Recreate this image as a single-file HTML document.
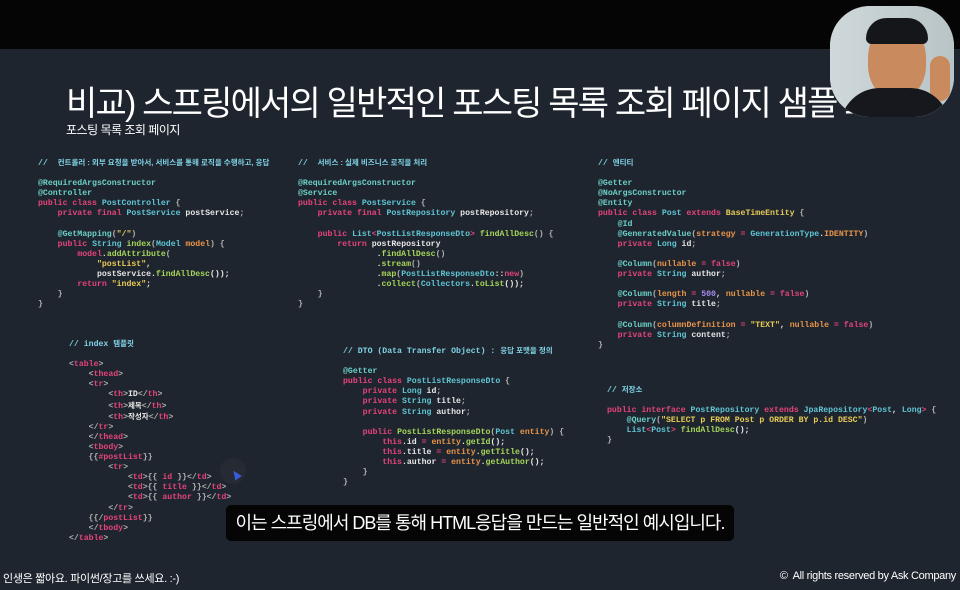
<!DOCTYPE html>
<html><head><meta charset="utf-8"><style>
body{margin:0;width:960px;height:590px;background:#1f252e;position:relative;overflow:hidden;font-family:"Liberation Sans","Noto Sans CJK KR",sans-serif;}
.top{position:absolute;left:0;top:0;width:960px;height:49px;background:#050505}
pre{position:absolute;margin:0;font-family:"Liberation Mono","Noto Sans CJK KR",monospace;font-size:8.2px;line-height:10.1px;color:#e6e6e6;white-space:pre;font-weight:bold}
.k{color:#e5437b}.t{color:#5fc6d6}.a{color:#6cd0c8}.f{color:#a6d65a}.o{color:#e8954a}.s{color:#e8cc55}.c{color:#7fd3e6}.n{color:#a98cf0}.p{color:#b0b0b0}
.h{font-family:"Liberation Sans","Noto Sans CJK KR",sans-serif;font-size:7.5px}
.title{position:absolute;left:66px;top:76px;color:#fff;font-size:34px;white-space:nowrap;letter-spacing:-1.8px}
.sub{position:absolute;left:66px;top:121px;color:#fff;font-size:12px;letter-spacing:-0.5px}
.cap{position:absolute;left:226px;top:505px;width:508px;height:36px;background:#050505;border-radius:5px;color:#fff;font-size:18px;line-height:36px;text-align:center;letter-spacing:-1px;white-space:nowrap}
.foot{position:absolute;top:570px;color:#fff;font-size:11px;letter-spacing:-0.3px}
.cam{position:absolute;left:830px;top:6px;width:124px;height:111px;border-radius:40px;overflow:hidden;background:#c9d3d6}
</style></head><body>
<div class="top"></div>
<div class="title">비교) 스프링에서의 일반적인 포스팅 목록 조회 페이지 샘플 코드</div>
<div class="sub">포스팅 목록 조회 페이지</div>
<div class="cam">
<div style="position:absolute;left:0;top:0;width:124px;height:111px;background:linear-gradient(90deg,#cfd8da,#b8c4c6)"></div>
<div style="position:absolute;left:38px;top:18px;width:58px;height:75px;border-radius:45%;background:#c98a5e"></div>
<div style="position:absolute;left:36px;top:12px;width:62px;height:26px;border-radius:30px 30px 8px 8px;background:#15161a"></div>
<div style="position:absolute;left:100px;top:50px;width:20px;height:45px;border-radius:10px;background:#c98a5e"></div>
<div style="position:absolute;left:10px;top:82px;width:110px;height:40px;border-radius:40px 40px 0 0;background:#16181d"></div>
</div>

<pre style="left:38px;top:158px"><span class="c">//  <span class="h">컨트롤러 : 외부 요청을 받아서, 서비스를 통해 로직을 수행하고, 응답</span></span>

<span class="a">@RequiredArgsConstructor</span>
<span class="a">@Controller</span>
<span class="k">public class</span> <span class="t">PostController</span> <span class="p">{</span>
    <span class="k">private final</span> <span class="t">PostService</span> postService<span class="p">;</span>

    <span class="a">@GetMapping</span><span class="p">(</span><span class="s">"/"</span><span class="p">)</span>
    <span class="k">public</span> <span class="t">String</span> <span class="f">index</span><span class="p">(</span><span class="t">Model</span> <span class="o">model</span><span class="p">) {</span>
        <span class="k">model</span>.<span class="f">addAttribute</span><span class="p">(</span>
            <span class="s">"postList"</span>,
            postService.<span class="f">findAllDesc</span>());
        <span class="k">return</span> <span class="s">"index"</span>;
    <span class="p">}</span>
<span class="p">}</span></pre>

<pre style="left:298px;top:158px"><span class="c">//  <span class="h">서비스 : 실제 비즈니스 로직을 처리</span></span>

<span class="a">@RequiredArgsConstructor</span>
<span class="a">@Service</span>
<span class="k">public class</span> <span class="t">PostService</span> <span class="p">{</span>
    <span class="k">private final</span> <span class="t">PostRepository</span> postRepository<span class="p">;</span>

    <span class="k">public</span> <span class="t">List</span><span class="k">&lt;</span><span class="t">PostListResponseDto</span><span class="k">&gt;</span> <span class="f">findAllDesc</span><span class="p">() {</span>
        <span class="k">return</span> postRepository
                .<span class="f">findAllDesc</span><span class="p">()</span>
                .<span class="f">stream</span><span class="p">()</span>
                .<span class="f">map</span><span class="p">(</span><span class="t">PostListResponseDto</span>::<span class="k">new</span><span class="p">)</span>
                .<span class="f">collect</span><span class="p">(</span><span class="t">Collectors</span>.<span class="f">toList</span>());
    <span class="p">}</span>
<span class="p">}</span></pre>

<pre style="left:598px;top:158px"><span class="c">// <span class="h">엔티티</span></span>

<span class="a">@Getter</span>
<span class="a">@NoArgsConstructor</span>
<span class="a">@Entity</span>
<span class="k">public class</span> <span class="t">Post</span> <span class="k">extends</span> <span class="s">BaseTimeEntity</span> <span class="p">{</span>
    <span class="a">@Id</span>
    <span class="a">@GeneratedValue</span><span class="p">(</span><span class="o">strategy</span> <span class="k">=</span> <span class="t">GenerationType</span>.<span class="o">IDENTITY</span><span class="p">)</span>
    <span class="k">private</span> <span class="t">Long</span> id<span class="p">;</span>

    <span class="a">@Column</span><span class="p">(</span><span class="o">nullable</span> <span class="k">=</span> <span class="k">false</span><span class="p">)</span>
    <span class="k">private</span> <span class="t">String</span> author<span class="p">;</span>

    <span class="a">@Column</span><span class="p">(</span><span class="o">length</span> <span class="k">=</span> <span class="n">500</span>, <span class="o">nullable</span> <span class="k">=</span> <span class="k">false</span><span class="p">)</span>
    <span class="k">private</span> <span class="t">String</span> title<span class="p">;</span>

    <span class="a">@Column</span><span class="p">(</span><span class="o">columnDefinition</span> <span class="k">=</span> <span class="s">"TEXT"</span>, <span class="o">nullable</span> <span class="k">=</span> <span class="k">false</span><span class="p">)</span>
    <span class="k">private</span> <span class="t">String</span> content<span class="p">;</span>
<span class="p">}</span></pre>

<pre style="left:69px;top:339px"><span class="c">// index <span class="h">템플릿</span></span>

<span class="p">&lt;</span><span class="k">table</span><span class="p">&gt;</span>
    <span class="p">&lt;</span><span class="k">thead</span><span class="p">&gt;</span>
    <span class="p">&lt;</span><span class="k">tr</span><span class="p">&gt;</span>
        <span class="p">&lt;</span><span class="k">th</span><span class="p">&gt;</span>ID<span class="p">&lt;/</span><span class="k">th</span><span class="p">&gt;</span>
        <span class="p">&lt;</span><span class="k">th</span><span class="p">&gt;</span><span class="h">제목</span><span class="p">&lt;/</span><span class="k">th</span><span class="p">&gt;</span>
        <span class="p">&lt;</span><span class="k">th</span><span class="p">&gt;</span><span class="h">작성자</span><span class="p">&lt;/</span><span class="k">th</span><span class="p">&gt;</span>
    <span class="p">&lt;/</span><span class="k">tr</span><span class="p">&gt;</span>
    <span class="p">&lt;/</span><span class="k">thead</span><span class="p">&gt;</span>
    <span class="p">&lt;</span><span class="k">tbody</span><span class="p">&gt;</span>
    <span class="p">{{</span><span class="k">#postList</span><span class="p">}}</span>
        <span class="p">&lt;</span><span class="k">tr</span><span class="p">&gt;</span>
            <span class="p">&lt;</span><span class="k">td</span><span class="p">&gt;{{</span> <span class="k">id</span> <span class="p">}}&lt;/</span><span class="k">td</span><span class="p">&gt;</span>
            <span class="p">&lt;</span><span class="k">td</span><span class="p">&gt;{{</span> <span class="k">title</span> <span class="p">}}&lt;/</span><span class="k">td</span><span class="p">&gt;</span>
            <span class="p">&lt;</span><span class="k">td</span><span class="p">&gt;{{</span> <span class="k">author</span> <span class="p">}}&lt;/</span><span class="k">td</span><span class="p">&gt;</span>
        <span class="p">&lt;/</span><span class="k">tr</span><span class="p">&gt;</span>
    <span class="p">{{/</span><span class="k">postList</span><span class="p">}}</span>
    <span class="p">&lt;/</span><span class="k">tbody</span><span class="p">&gt;</span>
<span class="p">&lt;/</span><span class="k">table</span><span class="p">&gt;</span></pre>

<div style="position:absolute;left:220px;top:458px;width:26px;height:26px;border-radius:50%;background:#262b33"></div>
<div style="position:absolute;left:232px;top:470px;width:0;height:0;border-left:4px solid transparent;border-right:4px solid transparent;border-bottom:9px solid #3a5bd8;transform:rotate(-35deg)"></div>

<pre style="left:343px;top:346px"><span class="c">// DTO (Data Transfer Object) : <span class="h">응답 포맷을 정의</span></span>

<span class="a">@Getter</span>
<span class="k">public class</span> <span class="t">PostListResponseDto</span> <span class="p">{</span>
    <span class="k">private</span> <span class="t">Long</span> id<span class="p">;</span>
    <span class="k">private</span> <span class="t">String</span> title<span class="p">;</span>
    <span class="k">private</span> <span class="t">String</span> author<span class="p">;</span>

    <span class="k">public</span> <span class="f">PostListResponseDto</span><span class="p">(</span><span class="t">Post</span> <span class="o">entity</span><span class="p">) {</span>
        <span class="k">this</span>.id <span class="k">=</span> <span class="o">entity</span>.<span class="f">getId</span>();
        <span class="k">this</span>.title <span class="k">=</span> <span class="o">entity</span>.<span class="f">getTitle</span>();
        <span class="k">this</span>.author <span class="k">=</span> <span class="o">entity</span>.<span class="f">getAuthor</span>();
    <span class="p">}</span>
<span class="p">}</span></pre>

<pre style="left:607px;top:385px"><span class="c">// <span class="h">저장소</span></span>

<span class="k">public interface</span> <span class="t">PostRepository</span> <span class="k">extends</span> <span class="t">JpaRepository</span><span class="k">&lt;</span><span class="t">Post</span>, <span class="t">Long</span><span class="k">&gt;</span> <span class="p">{</span>
    <span class="a">@Query</span><span class="p">(</span><span class="s">"SELECT p FROM Post p ORDER BY p.id DESC"</span><span class="p">)</span>
    <span class="t">List</span><span class="k">&lt;</span><span class="t">Post</span><span class="k">&gt;</span> <span class="f">findAllDesc</span>();
<span class="p">}</span></pre>

<div class="cap">이는 스프링에서 DB를 통해 HTML응답을 만드는 일반적인 예시입니다.</div>
<div class="foot" style="left:3px">인생은 짧아요. 파이썬/장고를 쓰세요. :-)</div>
<div class="foot" style="right:4px">©&nbsp; All rights reserved by Ask Company</div>
</body></html>
